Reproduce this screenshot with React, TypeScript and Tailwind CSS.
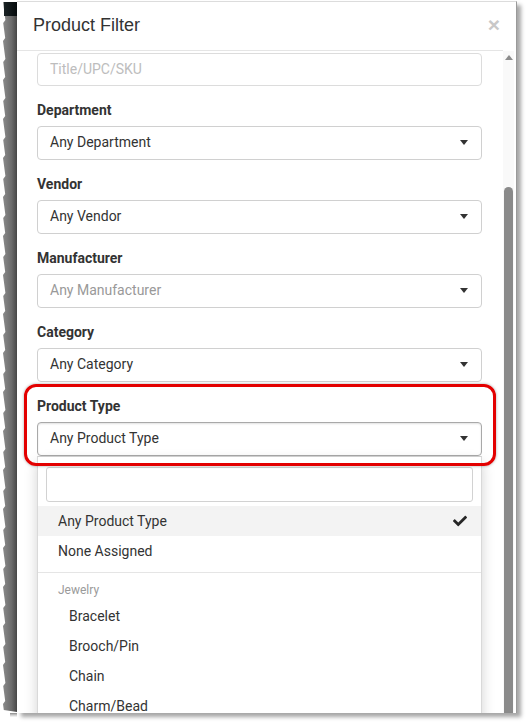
import React from "react";
import { FaCheck } from "react-icons/fa";

const FONT = { fontFamily: "Roboto, 'Liberation Sans', Arial, sans-serif" };

function Caret() {
  return <span className="block w-0 h-0 border-x-[4px] border-x-transparent border-t-[5px] border-t-[#333]" />;
}

function Select({ text, muted, active }: { text: string; muted?: boolean; active?: boolean }) {
  return (
    <div
      className={
        active
          ? "h-[34px] rounded-[4px] border border-[#a9a9a9] shadow-[inset_0_1px_2px_rgba(0,0,0,0.12)] bg-white flex items-center justify-between pl-[12px] pr-[13px] pb-[1px]"
          : "h-[34px] rounded-[4px] border border-[#d0d0d0] bg-white flex items-center justify-between pl-[12px] pr-[13px] pb-[1px]"
      }
    >
      <span className={muted ? "text-[14px] text-[#999]" : "text-[14px] text-[#333]"}>{text}</span>
      <Caret />
    </div>
  );
}

function Field({ label, text, muted }: { label: string; text: string; muted?: boolean }) {
  return (
    <div className="mb-[14px]">
      <div className="h-[20px] leading-[20px] text-[14px] font-bold text-[#333] mb-[6px]">{label}</div>
      <Select text={text} muted={muted} />
    </div>
  );
}

function TornEdge() {
  const pts: string[] = [];
  const H = 712;
  for (let y = 2, i = 0; y <= H; y += 3, i++) {
    const x = 4 + (((i * 7919) % 13) / 13) * 2.6 - 1;
    pts.push(`${x.toFixed(1)},${y}`);
  }
  const poly = `17,2 ${pts.join(" ")} 17,${H}`;
  return (
    <svg width="17" height="724" className="block shrink-0">
      <defs>
        <linearGradient id="tg" x1="0" x2="1" y1="0" y2="0">
          <stop offset="0" stopColor="#8a8a8a" />
          <stop offset="0.6" stopColor="#6c6c6c" />
          <stop offset="1" stopColor="#474747" />
        </linearGradient>
        <linearGradient id="tb" x1="0" x2="1" y1="0" y2="0">
          <stop offset="0" stopColor="#1a2224" />
          <stop offset="1" stopColor="#050a0c" />
        </linearGradient>
      </defs>
      <polygon points={poly} fill="url(#tg)" />
      <rect x="4" y="2" width="13" height="14" fill="url(#tb)" />
      <rect x="10" y="713" width="7" height="1" fill="#999" />
      <rect x="10" y="714" width="7" height="1" fill="#bbb" />
      <rect x="10" y="715" width="7" height="1" fill="#d6d6d6" />
      <rect x="10" y="716" width="7" height="1" fill="#eee" />
    </svg>
  );
}

export default function App() {
  return (
    <div className="w-[527px] h-[724px] bg-white flex overflow-hidden" style={FONT}>
      <TornEdge />
      <div className="mt-[1px] w-[500px] h-[712px] bg-white border-r border-[#9a9a9a] border-t border-t-[#dcdcdc] shadow-[4px_4px_4px_rgba(0,0,0,0.35)] flex flex-col overflow-hidden relative">
        {/* header */}
        <div className="flex shrink-0">
          <div className="w-[486px] h-[49px] border-b border-[#e5e5e5] flex items-center justify-between pl-[16px] pr-[3px]">
            <span
              className="text-[18px] text-[#333] pb-[2px]"
              style={{ fontFamily: "'Liberation Sans', Arial, sans-serif" }}
            >
              Product Filter
            </span>
            <span
              className="text-[21px] font-bold text-[#c8c8c8] leading-none pb-[3px]"
              style={{ fontFamily: "'Liberation Sans', Arial, sans-serif" }}
            >
              ×
            </span>
          </div>
        </div>
        {/* body */}
        <div className="flex flex-1 min-h-0">
          <div className="w-[486px] pl-[20px] pr-[21px] pt-[2px] overflow-hidden">
            <div className="h-[33px] rounded-[4px] border border-[#dcdcdc] flex items-center pl-[12px] mb-[14px] pb-[1px]">
              <span className="text-[14px] text-[#bdbdbd]">Title/UPC/SKU</span>
            </div>
            <Field label="Department" text="Any Department" />
            <Field label="Vendor" text="Any Vendor" />
            <Field label="Manufacturer" text="Any Manufacturer" muted />
            <Field label="Category" text="Any Category" />
            <div className="relative">
              <div className="absolute top-[-12px] left-[-13px] right-[-14px] h-[82px] border-[3px] border-[#e30000] rounded-[12px] shadow-[0_0_3px_rgba(0,0,0,0.35)] pointer-events-none z-10" />
              <div className="h-[20px] leading-[20px] text-[14px] font-bold text-[#333] mb-[6px]">Product Type</div>
              <Select text="Any Product Type" active />
              <div className="border border-[#d9d9d9] border-t-[#cfcfcf] bg-white shadow-[0_6px_12px_rgba(0,0,0,0.18)] pb-[20px]">
                <div className="px-[8px] pt-[10px] pb-[4px]">
                  <div className="h-[35px] rounded-[3px] border border-[#d2d2d2]" />
                </div>
                <div className="h-[30px] bg-[#f3f3f3] flex items-center justify-between pl-[20px] pr-[14px]">
                  <span className="text-[14px] text-[#333]">Any Product Type</span>
                  <FaCheck className="text-[#262626]" size={14} />
                </div>
                <div className="h-[30px] flex items-center pl-[20px]">
                  <span className="text-[14px] text-[#333]">None Assigned</span>
                </div>
                <div className="mt-[6px] h-px bg-[#e5e5e5]" />
                <div className="pl-[20px] pt-[8px] pb-[2px] leading-[18px] text-[12px] text-[#9a9a9a]">Jewelry</div>
                {["Bracelet", "Brooch/Pin", "Chain", "Charm/Bead"].map((t) => (
                  <div key={t} className="h-[30px] flex items-center pl-[31px]">
                    <span className="text-[14px] text-[#333]">{t}</span>
                  </div>
                ))}
              </div>
            </div>
          </div>
          {/* scrollbar */}
          <div className="w-[11px] bg-[#f9f9f9] flex flex-col items-center shrink-0">
            <div className="mt-[4px] w-0 h-0 border-x-[4px] border-x-transparent border-b-[5px] border-b-[#8c8c8c]" />
            <div className="mt-[127px] w-[9px] flex-1 bg-[#8a8a8a] rounded-t-[5px]" />
          </div>
        </div>
      </div>
    </div>
  );
}
